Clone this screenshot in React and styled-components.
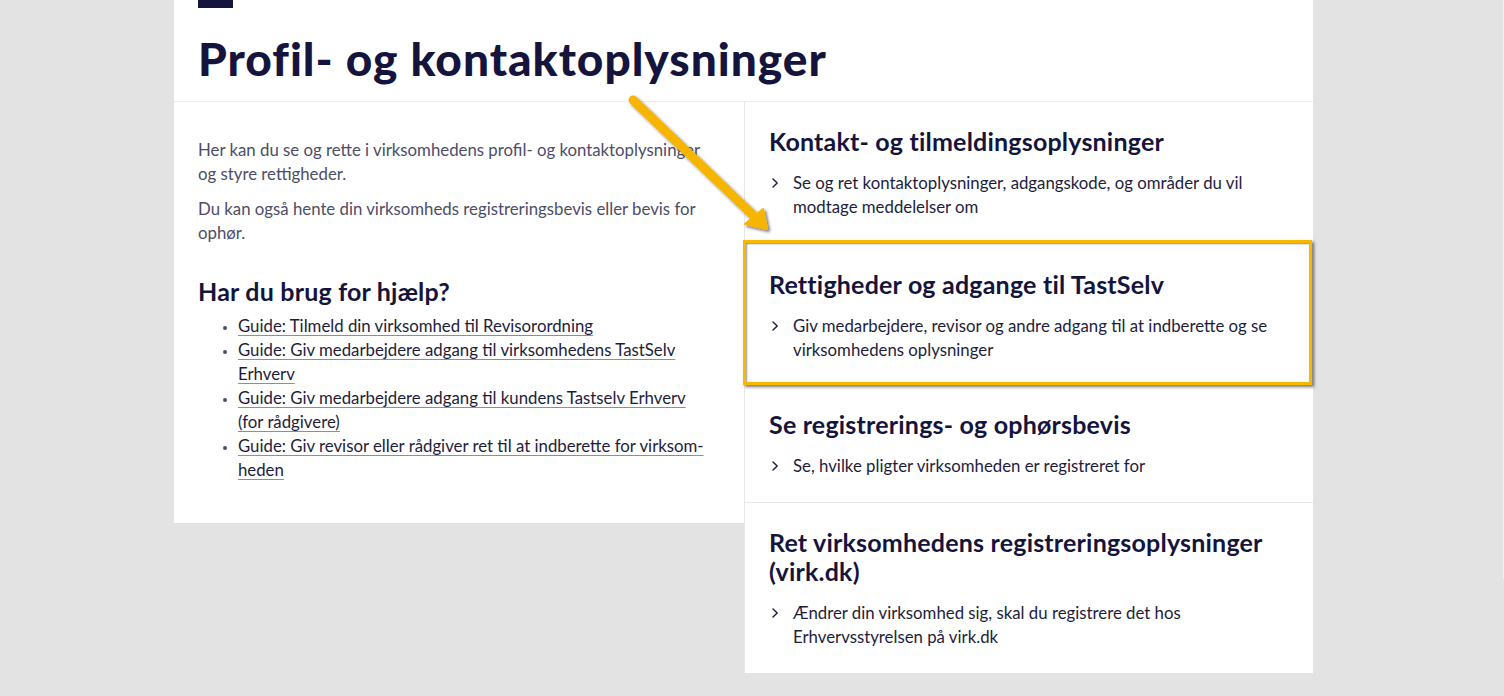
import React from 'react'
import styled, { createGlobalStyle } from 'styled-components'

const GlobalStyle = createGlobalStyle`
  html, body {
    margin: 0;
    padding: 0;
    background: #e3e3e3;
  }
  body {
    font-family: Lato, "Open Sans", Arial, sans-serif;
    color: #14143c;
  }
`

const intro = [
  'Her kan du se og rette i virksomhedens profil- og kontaktoplysninger og styre rettigheder.',
  'Du kan også hente din virksomheds registreringsbevis eller bevis for ophør.',
]

const guides = [
  'Guide: Tilmeld din virksomhed til Revisorordning',
  'Guide: Giv medarbejdere adgang til virksomhedens TastSelv Erhverv',
  'Guide: Giv medarbejdere adgang til kundens Tastselv Erhverv (for rådgivere)',
  'Guide: Giv revisor eller rådgiver ret til at indberette for virksom\u00ADheden',
]

const sections = [
  {
    title: 'Kontakt- og tilmeldingsoplysninger',
    text: 'Se og ret kontaktoplysninger, adgangskode, og områder du vil modtage meddelelser om',
  },
  {
    title: 'Rettigheder og adgange til TastSelv',
    text: 'Giv medarbejdere, revisor og andre adgang til at indberette og se virksomhedens oplysninger',
    highlighted: true,
  },
  {
    title: 'Se registrerings- og ophørsbevis',
    text: 'Se, hvilke pligter virksomheden er registreret for',
  },
  {
    title: 'Ret virksomhedens registreringsoplysninger (virk.dk)',
    text: 'Ændrer din virksomhed sig, skal du registrere det hos Erhvervsstyrelsen på virk.dk',
    last: true,
  },
]

function Chevron() {
  return (
    <ChevronIcon width="8" height="10" viewBox="0 0 8 10" aria-hidden="true">
      <polyline points="2,1 6.2,5 2,9" fill="none" stroke="#1d1d3b" strokeWidth="1.4" strokeLinecap="round" strokeLinejoin="round" />
    </ChevronIcon>
  )
}

function Arrow() {
  return (
    <ArrowSvg width="180" height="170" viewBox="0 0 180 170" aria-hidden="true">
      <defs>
        <filter id="arrowShadow" x="-20%" y="-20%" width="140%" height="140%">
          <feDropShadow dx="2" dy="2" stdDeviation="1.4" floodColor="#000" floodOpacity="0.55" />
        </filter>
      </defs>
      <g filter="url(#arrowShadow)" fill="#f7b500" stroke="#f7b500">
        <line x1="19" y1="20" x2="141" y2="137" strokeWidth="9" strokeLinecap="round" />
        <polygon points="131,144 149,129 153,149" strokeWidth="2" strokeLinejoin="round" />
      </g>
    </ArrowSvg>
  )
}

export default function App() {
  return (
    <>
      <GlobalStyle />
      <Page>
        <Header>
          <Mark />
          <Title>Profil- og kontaktoplysninger</Title>
        </Header>
        <Columns>
          <Intro>
            {intro.map((p) => (
              <Paragraph key={p}>{p}</Paragraph>
            ))}
            <HelpHeading>Har du brug for hjælp?</HelpHeading>
            <GuideList>
              {guides.map((g) => (
                <li key={g}>
                  <GuideLink href="#">{g}</GuideLink>
                </li>
              ))}
            </GuideList>
          </Intro>
          <LinkColumn>
            {sections.map((s) => (
              <Section key={s.title} $highlighted={s.highlighted} $last={s.last}>
                <SectionTitle>{s.title}</SectionTitle>
                <SectionLink href="#">
                  <Chevron />
                  <span>{s.text}</span>
                </SectionLink>
              </Section>
            ))}
          </LinkColumn>
        </Columns>
        <Arrow />
      </Page>
      <ScrollEdge />
    </>
  )
}

const Page = styled.div`
  position: relative;
  width: 1139px;
  margin-left: 174px;
`

const Header = styled.header`
  background: #fff;
  padding: 0 24px 15px;
  border-bottom: 1px solid #ececec;
`

const Mark = styled.div`
  width: 35px;
  height: 8px;
  background: #14143c;
`

const Title = styled.h1`
  margin: 23px 0 0;
  font-family: Lato, Arial, sans-serif;
  font-weight: 900;
  font-size: 46px;
  line-height: 1.2;
  letter-spacing: 1px;
  color: #14143c;
`

const Columns = styled.div`
  display: flex;
  align-items: flex-start;
`

const Intro = styled.div`
  width: 570px;
  box-sizing: border-box;
  padding: 36px 33px 41px 24px;
  background: #fff;
`

const Paragraph = styled.p`
  margin: 0 0 11px;
  font-size: 16.8px;
  line-height: 24px;
  color: #4d4d68;
`

const HelpHeading = styled.h2`
  margin: 32px 0 8px;
  font-size: 25px;
  line-height: 29px;
  font-weight: 700;
  letter-spacing: 0.2px;
  color: #14143c;
`

const GuideList = styled.ul`
  margin: 0;
  padding-left: 40px;
  font-size: 16.8px;
  line-height: 24px;
  color: #1d1d3b;

  li::marker {
    color: #4d4d68;
    font-size: 13px;
  }
`

const GuideLink = styled.a`
  color: #1d1d3b;
  text-decoration: underline;
  text-decoration-color: #8d8da2;
  text-underline-offset: 3px;
`

const LinkColumn = styled.div`
  width: 569px;
  box-sizing: border-box;
  border-left: 1px solid #e8e8e8;
  background: #fff;
`

const Section = styled.div`
  position: relative;
  padding: ${(props) => (props.$highlighted ? '26px 24px 22px' : '25px 24px 24px')};
  border-bottom: ${(props) => (props.$last ? 'none' : '1px solid #e8e8e8')};

  &::after {
    content: '';
    display: ${(props) => (props.$highlighted ? 'block' : 'none')};
    position: absolute;
    top: -4px;
    left: -2px;
    right: 1px;
    bottom: -1px;
    border: 3px solid #f9b800;
    box-shadow: 2px 2px 3px rgba(0, 0, 0, 0.55), inset 1px 1px 2px rgba(0, 0, 0, 0.4);
    pointer-events: none;
  }
`

const SectionTitle = styled.h2`
  margin: 0 0 15px;
  font-size: 25px;
  line-height: 29px;
  font-weight: 700;
  letter-spacing: 0.2px;
  color: #14143c;
`

const SectionLink = styled.a`
  display: flex;
  align-items: flex-start;
  gap: 14px;
  font-size: 16.8px;
  line-height: 24px;
  color: #1d1d3b;
  text-decoration: none;
`

const ChevronIcon = styled.svg`
  flex: none;
  margin-top: 7px;
  margin-left: 2px;
`

const ArrowSvg = styled.svg`
  position: absolute;
  left: 440px;
  top: 80px;
  overflow: visible;
`

const ScrollEdge = styled.div`
  position: fixed;
  top: 0;
  right: 0;
  width: 1px;
  height: 579px;
  background: #f2f2f2;
`
